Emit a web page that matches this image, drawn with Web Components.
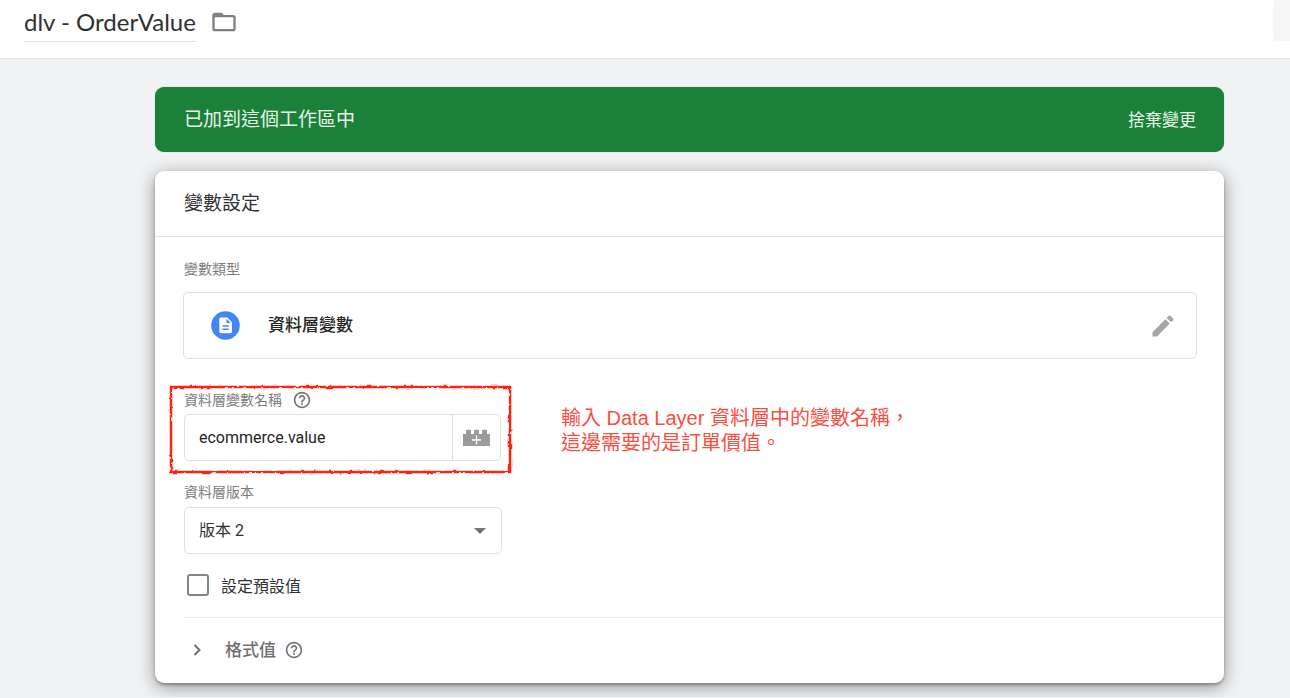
<!DOCTYPE html>
<html lang="zh-Hant">
<head>
<meta charset="utf-8">
<meta name="viewport" content="width=device-width, initial-scale=1">
<title>dlv - OrderValue</title>
<style>
  body { margin: 0; background: #f1f2f4; color: #303134; font-family: Roboto, "Noto Sans CJK TC", sans-serif; }
  main { padding: 28px 66px 14px 155px; display: grid; gap: 19px; }
</style>
</head>
<body>
<page-header>dlv - OrderValue</page-header>
<main>
  <workspace-banner>已加到這個工作區中<span slot="action">捨棄變更</span></workspace-banner>
  <settings-card>
    <span slot="title">變數設定</span>
    <type-picker label="變數類型">資料層變數</type-picker>
    <field-callout>
      <name-field label="資料層變數名稱" value="ecommerce.value"></name-field>
      <span slot="note">輸入 Data Layer 資料層中的變數名稱，<br>這邊需要的是訂單價值。</span>
    </field-callout>
    <version-field label="資料層版本" value="版本 2"></version-field>
    <check-field>設定預設值</check-field>
    <format-section slot="footer">格式值</format-section>
  </settings-card>
</main>
<script>
  const define = (name, html, setup) => {
    const template = document.createElement('template');
    template.innerHTML = '<style>*{box-sizing:border-box}button,input,select{font:inherit;color:inherit;margin:0}svg{display:block;flex:none}</style>' + html;
    customElements.define(name, class extends HTMLElement {
      constructor() {
        super();
        this.attachShadow({ mode: 'open' }).append(template.content.cloneNode(true));
      }
      connectedCallback() { if (setup) setup(this.shadowRoot, this); }
    });
  };
  const setLabel = (root, host) => {
    root.querySelector('label').textContent = host.getAttribute('label');
  };

  define('help-icon', `
    <style>:host{display:block;color:#757575}</style>
    <svg width="18" height="18" viewBox="1 1 22 22" fill="currentColor" aria-hidden="true"><path d="M11 18h2v-2h-2v2zm1-16C6.48 2 2 6.48 2 12s4.48 10 10 10 10-4.48 10-10S17.52 2 12 2zm0 18c-4.41 0-8-3.59-8-8s3.59-8 8-8 8 3.59 8 8-3.59 8-8 8zm0-14c-2.21 0-4 1.79-4 4h2c0-1.1.9-2 2-2s2 .9 2 2c0 2-3 1.75-3 5h2c0-2.25 3-2.5 3-5 0-2.21-1.79-4-4-4z"/></svg>`);

  define('page-header', `
    <style>
      :host{display:block;background:#fff;border-bottom:1px solid #dfe0e2}
      header{display:flex;align-items:flex-start;height:58px;padding-left:24px}
      h1{margin:0;padding-top:4px;height:42px;border-bottom:1px solid #dedede;font:400 24px/36px Lato,sans-serif;color:#303030;white-space:nowrap}
      .folder{border:0;background:none;padding:0;margin:8px 0 0 14px;color:#808080}
      .more{margin-left:auto;width:17px;height:41px;border:0;border-radius:4px 0 0 4px;background:#f6f6f6}
    </style>
    <header>
      <h1><slot></slot></h1>
      <button class="folder" aria-label="資料夾"><svg width="28" height="28" viewBox="0 0 24 24" fill="currentColor"><path d="M10 4H4c-1.100 0-2 .9-2 2v12c0 1.100.9 2 2 2h16c1.100 0 2-.9 2-2V8c0-1.100-.9-2-2-2h-8l-2-2zm10 14H4V8h16v10z"/></svg></button>
      <button class="more" aria-label="更多"></button>
    </header>`);

  define('workspace-banner', `
    <style>
      :host{display:flex;align-items:center;justify-content:space-between;height:65px;padding:0 28px 0 29px;border-radius:9px;background:#1b8139;color:#e9f5ec;box-shadow:0 0 1px #0006}
      p{margin:0;font-size:19px;line-height:28px}
      button{border:0;padding:0;background:none;font-size:17px;line-height:24px}
    </style>
    <p><slot></slot></p><button><slot name="action"></slot></button>`);

  define('settings-card', `
    <style>
      :host{display:block;background:#fff;border-radius:9px;box-shadow:0 2px 3px #0004,0 4px 18px #0006}
      h2{margin:0;height:66px;padding:0 29px;border-bottom:1px solid #e2e3e5;font-size:19px;font-weight:400;line-height:65px}
      .body{padding:22px 28px 20px 29px}
      .foot{margin-left:29px;padding-bottom:2px;border-top:1px solid #ececec}
    </style>
    <h2><slot name="title"></slot></h2>
    <div class="body"><slot></slot></div>
    <div class="foot"><slot name="footer"></slot></div>`);

  define('type-picker', `
    <style>
      :host{display:block}
      .label{color:#7d7d7d;font-size:14px;line-height:20px}
      button{display:flex;align-items:center;width:calc(100% + 2px);height:67px;margin:13px -1px 0;padding:0 19px 0 27px;background:#fff;border:1px solid #dcdee2;border-radius:5px;text-align:left;font-size:17px;font-weight:500;line-height:24px;color:#252525}
      .name{flex:1;padding:0 0 2px 28px}
      .pencil{color:#a6a6a6}
    </style>
    <div class="label" id="label"></div>
    <button aria-describedby="label">
      <svg width="29" height="29" viewBox="0 0 29 29" aria-hidden="true"><circle cx="14.500" cy="14.500" r="14.300" fill="#4285f4"/><path fill="#fff" d="M10 6.500h6.300l4.700 4.700v9.300c0 1-.7 1.700-1.700 1.700H10c-1 0-1.700-.7-1.700-1.700V8.200c0-1 .7-1.700 1.700-1.700z"/><path fill="#4285f4" d="M15.500 7.800V12h4.200zM11.500 14.300h6.200v1.400h-6.200zm0 3.200h6.200v1.400h-6.200z"/></svg>
      <span class="name"><slot></slot></span>
      <svg class="pencil" width="28" height="28" viewBox="0 0 24 24" fill="currentColor" aria-hidden="true"><path d="M3 17.250V21h3.750L17.810 9.940l-3.750-3.750L3 17.250zM20.710 7.040a1 1 0 0 0 0-1.410l-2.340-2.340a1 1 0 0 0-1.410 0l-1.830 1.830 3.750 3.750 1.830-1.830z"/></svg>
    </button>`, (root, host) => { root.querySelector('.label').textContent = host.getAttribute('label'); });

  define('field-callout', `
    <style>
      :host{display:flex;gap:50px;margin:27px 0 0 -14px}
      .frame{position:relative;flex:none;padding:4px 10px 13px 14px}
      .frame svg{position:absolute;top:1px;left:1px;width:calc(100% - 2px);height:calc(100% - 3px);overflow:visible;pointer-events:none}
      .note{margin:0;padding-top:20px;color:#f94e40;font:400 20px/25px "Liberation Sans","Noto Sans CJK TC",sans-serif}
    </style>
    <div class="frame">
      <slot></slot>
      <svg aria-hidden="true"><defs><filter id="rough" color-interpolation-filters="sRGB"><feTurbulence type="fractalNoise" baseFrequency="0.2" numOctaves="2" seed="3"/><feDisplacementMap in="SourceGraphic" scale="3" xChannelSelector="R" yChannelSelector="G"/></filter></defs><rect x="0" y="0" width="100%" height="100%" fill="none" stroke="#fb2413" stroke-width="2.500" filter="url(#rough)"/></svg>
    </div>
    <p class="note"><slot name="note"></slot></p>`);

  define('name-field', `
    <style>
      :host{display:block;width:317px}
      .head{display:flex;align-items:center;gap:11px;height:20px;margin-bottom:4px}
      label{color:#7d7d7d;font-size:14px;line-height:20px}
      .control{display:flex;height:47px;border:1px solid #e0e0e0;border-radius:5px;background:#fff}
      input{flex:1;min-width:0;border:0;border-radius:5px;padding:0 14px;background:none;outline:0;font-size:16px;color:#252525}
      button{display:grid;place-items:center;width:48px;border:0;border-left:1px solid #e0e0e0;padding:0;background:none;color:#9b9b9b}
    </style>
    <div class="head"><label for="field"></label><help-icon></help-icon></div>
    <div class="control">
      <input id="field" type="text">
      <button aria-label="選擇變數"><svg width="27" height="17" viewBox="0 0 27 17"><path fill="currentColor" d="M0 5h3V1.500Q3 .8 3.700.8h3.600Q8 .8 8 1.500V5h3V1.500q0-.7.7-.7h3.600q.7 0 .7.7V5h3V1.500q0-.7.7-.7h3.600q.7 0 .7.7V5h3v12H0z"/><path stroke="#fff" stroke-width="1.300" d="M13.500 6.500v9M9 11h9"/></svg></button>
    </div>`, (root, host) => { setLabel(root, host); root.querySelector('input').value = host.getAttribute('value'); });

  define('version-field', `
    <style>
      :host{display:block;width:318px;margin-top:8px}
      label{display:block;margin-bottom:5px;color:#7d7d7d;font-size:14px;line-height:20px}
      .control{display:grid;align-items:center}
      select,svg{grid-area:1/1}
      select{appearance:none;width:100%;height:47px;border:1px solid #e0e0e0;border-radius:5px;padding:0 40px 0 14px;background:#fff;font-size:16px;color:#303134}
      svg{justify-self:end;margin-right:16px;pointer-events:none}
    </style>
    <label for="field"></label>
    <div class="control"><select id="field"><option></option></select><svg width="12" height="6" viewBox="0 0 12 6" aria-hidden="true"><path fill="#757575" d="M0 0h12L6 6z"/></svg></div>`,
    (root, host) => { setLabel(root, host); root.querySelector('option').textContent = host.getAttribute('value'); });

  define('check-field', `
    <style>
      :host{display:block;margin-top:19px}
      label{display:flex;align-items:center;gap:12px;height:24px;padding-left:3px;font-size:16px;line-height:24px}
      input{appearance:none;width:22px;height:22px;border:2px solid #80868b;border-radius:3px;background:#fff}
      span{padding-top:3px}
    </style>
    <label><input type="checkbox"><span><slot></slot></span></label>`);

  define('format-section', `
    <style>
      :host{display:flex;align-items:center;height:63px;color:#707070}
      button{display:flex;align-items:center;gap:23px;border:0;padding:0;background:none;font-size:17px;line-height:24px;font-weight:500}
      button svg{margin-left:9px}
      help-icon{margin-left:9px}
    </style>
    <button aria-expanded="false"><svg width="9" height="12" viewBox="0 0 9 12" aria-hidden="true"><path d="M1.500 1l5 5-5 5" fill="none" stroke="currentColor" stroke-width="2"/></svg><span><slot></slot></span></button><help-icon></help-icon>`);
</script>
</body>
</html>
